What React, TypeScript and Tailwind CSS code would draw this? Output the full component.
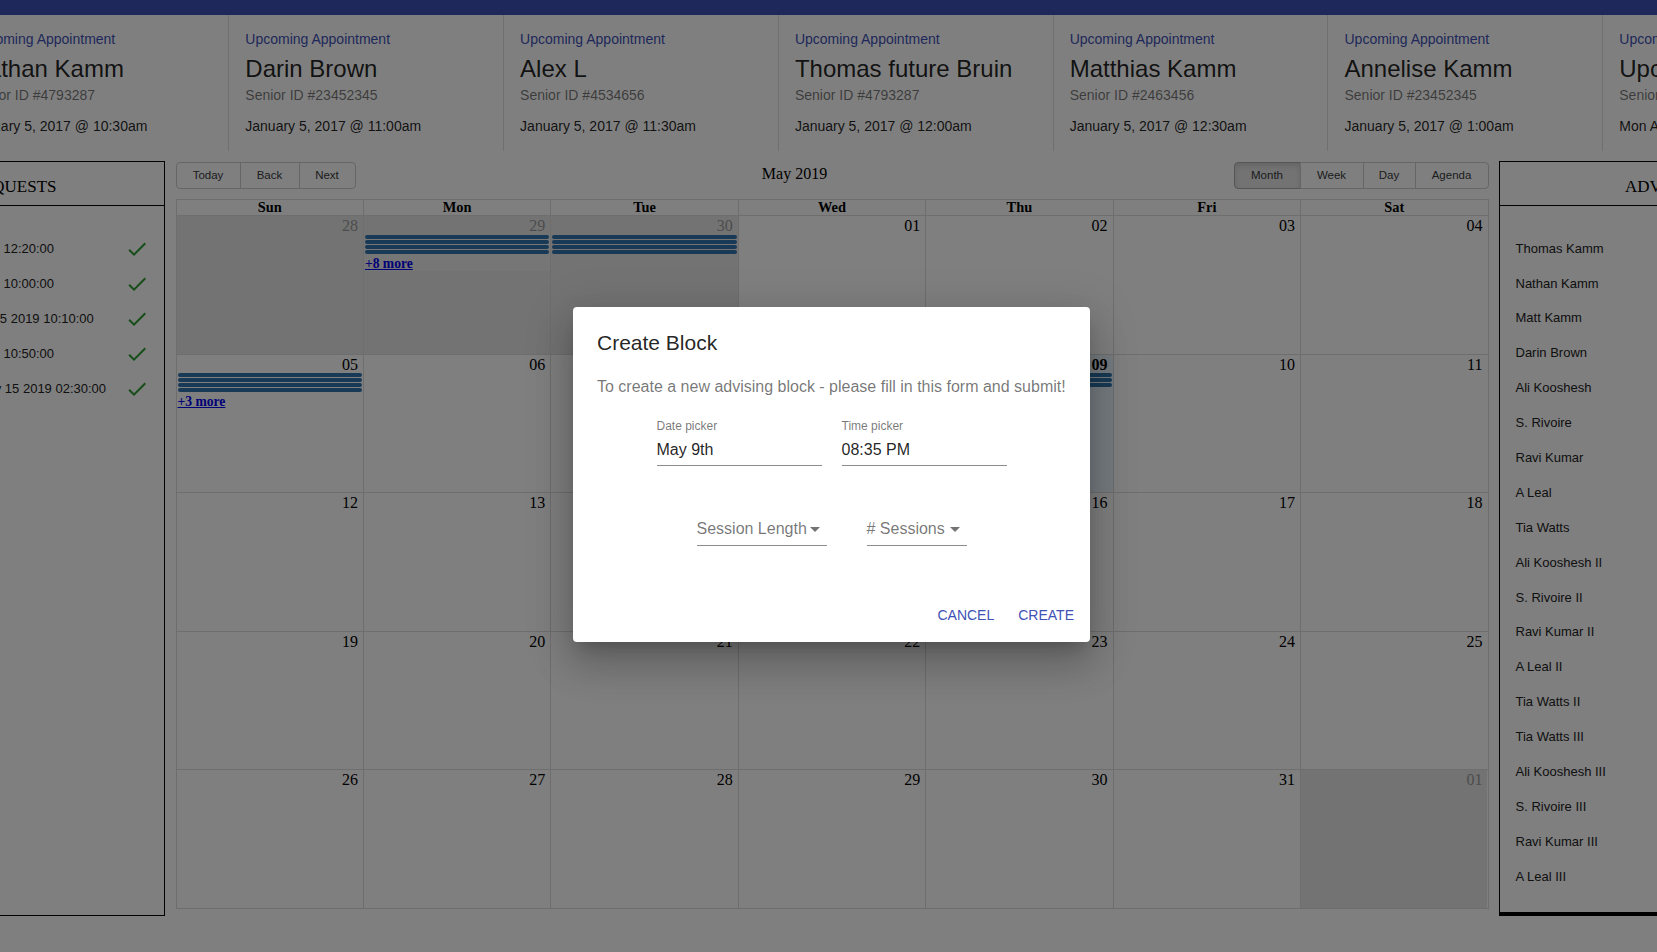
const cards = [
  { name: "Nathan Kamm", id: "#4793287", date: "January 5, 2017 @ 10:30am" },
  { name: "Darin Brown", id: "#23452345", date: "January 5, 2017 @ 11:00am" },
  { name: "Alex L", id: "#4534656", date: "January 5, 2017 @ 11:30am" },
  { name: "Thomas future Bruin", id: "#4793287", date: "January 5, 2017 @ 12:00am" },
  { name: "Matthias Kamm", id: "#2463456", date: "January 5, 2017 @ 12:30am" },
  { name: "Annelise Kamm", id: "#23452345", date: "January 5, 2017 @ 1:00am" },
  { name: "Upcoming Senior", id: "#4793287", date: "Mon Apr 29 2019 @ 10:00am" },
];

const requests = [
  "A Leal - May 15 2019 12:20:00",
  "A Leal - May 15 2019 10:00:00",
  "Ali Kooshesh - May 15 2019 10:10:00",
  "A Leal - May 15 2019 10:50:00",
  "Thomas Kamm - May 15 2019 02:30:00",
];

const advisors = [
  "Thomas Kamm",
  "Nathan Kamm",
  "Matt Kamm",
  "Darin Brown",
  "Ali Kooshesh",
  "S. Rivoire",
  "Ravi Kumar",
  "A Leal",
  "Tia Watts",
  "Ali Kooshesh II",
  "S. Rivoire II",
  "Ravi Kumar II",
  "A Leal II",
  "Tia Watts II",
  "Tia Watts III",
  "Ali Kooshesh III",
  "S. Rivoire III",
  "Ravi Kumar III",
  "A Leal III",
];

type Day = { d: string; off?: boolean; today?: boolean; events?: number; more?: string };

const weeks: Day[][] = [
  [
    { d: "28", off: true },
    { d: "29", off: true, events: 4, more: "+8 more" },
    { d: "30", off: true, events: 4 },
    { d: "01" },
    { d: "02" },
    { d: "03" },
    { d: "04" },
  ],
  [
    { d: "05", events: 4, more: "+3 more" },
    { d: "06" },
    { d: "07" },
    { d: "08" },
    { d: "09", today: true, events: 3 },
    { d: "10" },
    { d: "11" },
  ],
  [{ d: "12" }, { d: "13" }, { d: "14" }, { d: "15" }, { d: "16" }, { d: "17" }, { d: "18" }],
  [{ d: "19" }, { d: "20" }, { d: "21" }, { d: "22" }, { d: "23" }, { d: "24" }, { d: "25" }],
  [{ d: "26" }, { d: "27" }, { d: "28" }, { d: "29" }, { d: "30" }, { d: "31" }, { d: "01", off: true }],
];

const dayNames = ["Sun", "Mon", "Tue", "Wed", "Thu", "Fri", "Sat"];

const DropArrow = () => (
  <svg viewBox="0 0 24 24" className="w-6 h-6 fill-black/55">
    <path d="M7 10l5 5 5-5z" />
  </svg>
);

const CheckIcon = () => (
  <svg viewBox="0 0 24 24" className="w-6 h-6 fill-[#2e9b33]">
    <path d="M9 16.17L4.83 12l-1.42 1.41L9 19 21 7l-1.41-1.41z" />
  </svg>
);

const PickerField = ({ label, value }: { label: string; value: string }) => (
  <div className="w-[165px] flex flex-col">
    <div className="h-[16px] pt-[1.5px] text-[12px] leading-[12px] text-black/55">{label}</div>
    <div className="h-[32px] pt-[6px] pb-[6px] text-[16px] leading-[19px] text-black/87 border-b border-black/45">
      {value}
    </div>
  </div>
);

const SelectField = ({ label, width }: { label: string; width: string }) => (
  <div className={`${width} flex flex-col`}>
    <div className="h-[16px]" />
    <div className="relative h-[32px] pt-[5px] pb-[6px] text-[16px] leading-[19px] text-black/55 border-b border-black/45 whitespace-nowrap">
      {label}
      <span className="absolute right-0 top-[3px]">
        <DropArrow />
      </span>
    </div>
  </div>
);

const ToolButton = ({ label, className }: { label: string; className: string }) => (
  <button className={`h-[27px] border text-[11.5px] text-[#373a3c] ${className}`}>{label}</button>
);

const App = () => {
  return (
    <div className="relative w-[1657px] h-[952px] overflow-hidden bg-white font-['Liberation_Sans',Arial,sans-serif]">
      <div className="h-[15px] bg-[#3f51b5]" />

      {/* upcoming appointments strip */}
      <div className="flex ml-[-45.5px]">
        {cards.map((c) => (
          <div key={c.name} className="w-[274.8px] shrink-0 h-[136px] border-r border-[#e0e0e0] px-4 pt-[13.5px] whitespace-nowrap">
            <div className="text-[14px] leading-[20px] text-[#3f51b5]">Upcoming Appointment</div>
            <div className="mt-[4px] text-[24px] leading-[32px] text-black/87">{c.name}</div>
            <div className="text-[14px] leading-[20px] text-black/55">Senior ID {c.id}</div>
            <div className="mt-[11.7px] text-[14px] leading-[20px] text-black/87">{c.date}</div>
          </div>
        ))}
      </div>

      <div className="flex items-start mt-[10px] ml-[-138px]">
        {/* requests panel */}
        <div className="w-[303px] h-[755px] shrink-0 border border-black bg-white flex flex-col">
          <div className="h-[44px] border-b border-black flex items-center justify-center pt-[6px] font-['Liberation_Serif','Times_New_Roman',serif] text-[17px] text-black">
            REQUESTS
          </div>
          <div className="pt-[25px] pl-[14px] pr-[15.5px]">
            {requests.map((r) => (
              <div key={r} className="h-[35px] flex items-center justify-between text-[13px] text-[#222] whitespace-nowrap">
                <span>{r}</span>
                <CheckIcon />
              </div>
            ))}
          </div>
        </div>

        {/* calendar */}
        <div className="w-[1313px] shrink-0 ml-[10.5px] h-[748px] flex flex-col pt-[1px] font-['Liberation_Serif','Times_New_Roman',serif]">
          <div className="flex items-center h-[27px] mb-[10px] font-['Liberation_Sans',Arial,sans-serif]">
            <div className="flex">
              <ToolButton label="Today" className="w-[65px] border-[#ccc] rounded-l-[4px]" />
              <ToolButton label="Back" className="w-[60px] -ml-px border-[#ccc]" />
              <ToolButton label="Next" className="w-[57px] -ml-px border-[#ccc] rounded-r-[4px]" />
            </div>
            <div className="flex-1 text-center pb-[4px] text-[16px] text-black font-['Liberation_Serif','Times_New_Roman',serif]">
              May 2019
            </div>
            <div className="flex">
              <ToolButton
                label="Month"
                className="w-[67px] border-[#adadad] bg-[#e6e6e6] rounded-l-[4px] shadow-[inset_0_3px_5px_rgba(0,0,0,0.125)]"
              />
              <ToolButton label="Week" className="w-[64px] -ml-px border-[#ccc]" />
              <ToolButton label="Day" className="w-[53px] -ml-px border-[#ccc]" />
              <ToolButton label="Agenda" className="w-[74px] -ml-px border-[#ccc] rounded-r-[4px]" />
            </div>
          </div>

          <div className="flex-1 border border-[#ddd] flex flex-col">
            <div className="h-[16px] flex border-b border-[#ddd]">
              {dayNames.map((n, i) => (
                <div
                  key={n}
                  className={`flex-1 text-center px-[3px] text-[14.4px] leading-[15px] font-bold text-black ${i > 0 ? "border-l border-[#ddd]" : ""}`}
                >
                  {n}
                </div>
              ))}
            </div>
            {weeks.map((week, wi) => (
              <div key={wi} className={`flex-1 flex ${wi > 0 ? "border-t border-[#ddd]" : ""}`}>
                {week.map((day, di) => (
                  <div
                    key={di}
                    className={`flex-1 min-w-0 flex flex-col ${di > 0 ? "border-l border-[#ddd]" : ""} ${
                      day.off ? "bg-[#e6e6e6]" : day.today ? "bg-[#eaf6ff]" : "bg-white"
                    }`}
                  >
                    <div
                      className={`text-right pr-[5px] pt-[1px] text-[16px] leading-[17.5px] ${day.off ? "text-[#999]" : "text-black"} ${
                        day.today ? "font-bold" : ""
                      }`}
                    >
                      {day.d}
                    </div>
                    {day.events ? (
                      <div className={day.more ? "bg-white/30" : ""}>
                        {Array.from({ length: day.events }).map((_, k) => (
                          <div key={k} className="px-[1px] pb-[1px]">
                            <div className="h-[4px] rounded-[5px] bg-[#3174ad]" />
                          </div>
                        ))}
                        {day.more ? (
                          <div className="px-[1px] leading-[15px]">
                            <a href="#" className="text-[13.6px] font-bold underline text-[#0000ee]">
                              {day.more}
                            </a>
                          </div>
                        ) : null}
                      </div>
                    ) : null}
                  </div>
                ))}
              </div>
            ))}
          </div>
        </div>

        {/* advisors panel */}
        <div className="w-[337px] h-[755px] shrink-0 ml-[10.5px] border border-black border-b-4 bg-white flex flex-col">
          <div className="h-[44px] border-b border-black flex items-center justify-center pt-[6px] font-['Liberation_Serif','Times_New_Roman',serif] text-[17px] text-black">
            ADVISORS
          </div>
          <div className="pt-[25px] pl-[15.5px]">
            {advisors.map((a) => (
              <div key={a} className="h-[34.9px] flex items-center text-[13px] text-[#222]">
                {a}
              </div>
            ))}
          </div>
        </div>
      </div>

      {/* modal */}
      <div className="absolute inset-0 bg-black/50 flex items-center justify-center">
        <div className="w-[517px] ml-[6px] mt-[-3px] bg-white rounded-[4px] flex flex-col shadow-[0px_11px_15px_-7px_rgba(0,0,0,0.2),0px_24px_38px_3px_rgba(0,0,0,0.14),0px_9px_46px_8px_rgba(0,0,0,0.12)]">
          <div className="px-6 pt-6 pb-[19px] text-[21px] leading-[24.5px] text-black/87">Create Block</div>
          <div className="px-6 text-[16px] leading-[24px] text-black/55 whitespace-nowrap">
            To create a new advising block - please fill in this form and submit!
          </div>
          <div className="flex justify-center gap-5 mt-[19.5px]">
            <PickerField label="Date picker" value="May 9th" />
            <PickerField label="Time picker" value="08:35 PM" />
          </div>
          <div className="flex justify-center gap-10 mt-[31.5px]">
            <SelectField label="Session Length" width="w-[130px]" />
            <SelectField label="# Sessions" width="w-[100px]" />
          </div>
          <div className="flex justify-end gap-2 mt-[52px] pr-2 pb-[8.5px]">
            <button className="h-[36px] min-w-[64px] px-2 text-[14px] text-[#3f51b5]">CANCEL</button>
            <button className="h-[36px] min-w-[64px] px-2 text-[14px] text-[#3f51b5]">CREATE</button>
          </div>
        </div>
      </div>
    </div>
  );
};

export default App;
